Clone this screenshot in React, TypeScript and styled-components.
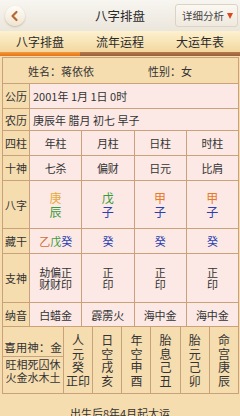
import styled, { createGlobalStyle } from "styled-components";

const GlobalStyle = createGlobalStyle`
  html, body {
    margin: 0;
    padding: 0;
  }
  body {
    width: 240px;
    height: 416px;
    overflow: hidden;
    background: #f6ddaf;
    color: #333;
    font-family: "Noto Sans CJK SC", "Noto Sans", sans-serif;
  }
`;

const LINE = "#c9a27a";
const TAN = "#f6ddaf";
const PINK = "#fce9e5";

const pillars = [
  { name: "年柱", god: "七杀", stem: "庚", stemColor: "#e8a93a", branch: "辰", branchColor: "#3a9a3a" },
  { name: "月柱", god: "偏财", stem: "戊", stemColor: "#3a9a3a", branch: "子", branchColor: "#2a3fb0" },
  { name: "日柱", god: "日元", stem: "甲", stemColor: "#e87a2a", branch: "子", branchColor: "#2a3fb0" },
  { name: "时柱", god: "比肩", stem: "甲", stemColor: "#e87a2a", branch: "子", branchColor: "#2a3fb0" },
];

const hidden = [
  [
    { t: "乙", c: "#d0703a" },
    { t: "戊", c: "#3a9a3a" },
    { t: "癸", c: "#2a3fb0" },
  ],
  [{ t: "癸", c: "#2a3fb0" }],
  [{ t: "癸", c: "#2a3fb0" }],
  [{ t: "癸", c: "#2a3fb0" }],
];

const branchGods = [
  ["劫偏正", "财财印"],
  ["正", "印"],
  ["正", "印"],
  ["正", "印"],
];

const nayin = ["白蜡金", "霹雳火", "海中金", "海中金"];

const extras = [
  ["人", "元", "癸", "正印"],
  ["日", "空", "戌", "亥"],
  ["年", "空", "申", "酉"],
  ["胎", "息", "己", "丑"],
  ["胎", "元", "己", "卯"],
  ["命", "宫", "庚", "辰"],
];

const App = () => {
  return (
    <>
      <GlobalStyle />
      <Header>
        <BackBtn>
          <svg width="20" height="20" viewBox="0 0 20 20">
            <polyline
              points="11.5,6 7.5,10 11.5,14"
              fill="none"
              stroke="#b8672e"
              strokeWidth="2.2"
              strokeLinecap="round"
              strokeLinejoin="round"
            />
          </svg>
        </BackBtn>
        <Title>八字排盘</Title>
        <DetailBtn>
          详细分析<Arrow />
        </DetailBtn>
      </Header>
      <Tabs>
        <Tab>八字排盘</Tab>
        <Tab>流年运程</Tab>
        <Tab>大运年表</Tab>
      </Tabs>
      <Underline>
        <UnderlinePart $active />
        <UnderlinePart />
        <UnderlinePart />
      </Underline>

      <Table>
        <NameRow>
          <NameField>姓名：蒋依依</NameField>
          <span>性别：女</span>
        </NameRow>

        <Label>公历</Label>
        <WideCell>2001年 1月 1日 0时</WideCell>

        <Label>农历</Label>
        <WideCell>庚辰年 腊月 初七 早子</WideCell>

        <Label>四柱</Label>
        {pillars.map((p) => (
          <Cell key={p.name}>{p.name}</Cell>
        ))}

        <Label>十神</Label>
        {pillars.map((p) => (
          <Cell key={p.name}>{p.god}</Cell>
        ))}

        <Label>八字</Label>
        {pillars.map((p) => (
          <Cell key={p.name}>
            <Stack $lh={14} $size={12}>
              <span style={{ color: p.stemColor }}>{p.stem}</span>
              <span style={{ color: p.branchColor }}>{p.branch}</span>
            </Stack>
          </Cell>
        ))}

        <Label>藏干</Label>
        {hidden.map((list, i) => (
          <Cell key={i}>
            {list.map((h, j) => (
              <span key={j} style={{ color: h.c }}>
                {h.t}
              </span>
            ))}
          </Cell>
        ))}

        <Label>支神</Label>
        {branchGods.map((lines, i) => (
          <Cell key={i}>
            <Stack $lh={12} $size={11}>
              {lines.map((l, j) => (
                <span key={j}>{l}</span>
              ))}
            </Stack>
          </Cell>
        ))}

        <Label>纳音</Label>
        {nayin.map((n, i) => (
          <Cell key={i}>{n}</Cell>
        ))}
      </Table>

      <Bottom>
        <FavCell>喜用神：金</FavCell>
        <StateCell>
          <span>旺相死囚休</span>
          <span>火金水木土</span>
        </StateCell>
        {extras.map((lines, i) => (
          <VerticalCell key={i} $col={i + 2}>
            {lines.map((l, j) => (
              <span key={j}>{l}</span>
            ))}
          </VerticalCell>
        ))}
      </Bottom>

      <Footer>出生后8年4月起大运</Footer>
    </>
  );
};

export default App;

const Header = styled.div`
  height: 31px;
  display: grid;
  grid-template-columns: 1fr auto 1fr;
  align-items: center;
  background: linear-gradient(#f8f6f1, #ebe6dc);
`;

const BackBtn = styled.div`
  width: 20px;
  height: 20px;
  margin-left: 5px;
  border-radius: 50%;
  background: linear-gradient(#fffdf8, #efe4d2);
  box-shadow: 0 1px 2px rgba(120, 90, 50, 0.35);
  display: flex;
  align-items: center;
  justify-content: center;
`;

const Title = styled.div`
  font-size: 12.5px;
  color: #2a2a2a;
`;

const DetailBtn = styled.div`
  justify-self: end;
  margin-right: 2px;
  height: 21px;
  padding: 0 4px 0 6px;
  display: flex;
  align-items: center;
  gap: 3px;
  font-size: 10.5px;
  color: #444;
  background: linear-gradient(#fbf8f2, #efe9de);
  border: 1px solid #ddd3c4;
  border-radius: 3px;
`;

const Arrow = styled.span`
  width: 0;
  height: 0;
  border-left: 3.5px solid transparent;
  border-right: 3.5px solid transparent;
  border-top: 6px solid #d9481e;
`;

const Tabs = styled.div`
  height: 21px;
  display: grid;
  grid-template-columns: repeat(3, 1fr);
  align-items: center;
  background: linear-gradient(#fdf1cf, #f3d8a0);
`;

const Tab = styled.div`
  text-align: center;
  font-size: 12px;
  color: #2a2a2a;
`;

const Underline = styled.div`
  height: 4px;
  display: grid;
  grid-template-columns: 80px 1fr 1fr;
`;

const UnderlinePart = styled.div<{ $active?: boolean }>`
  background: ${(p) =>
    p.$active
      ? "linear-gradient(#f59a3a, #e4731c)"
      : "linear-gradient(#b77a4c, #9a6038)"};
`;

const Table = styled.div`
  margin: 1px 1px 0 2px;
  display: grid;
  grid-template-columns: 26px repeat(4, 1fr);
  grid-template-rows: 25px 24px 21px 24px 24px 47px 24px 48px 23px;
  gap: 1px;
  background: ${LINE};
  border: 1px solid ${LINE};
  font-size: 11px;
`;

const NameRow = styled.div`
  grid-column: 1 / -1;
  background: ${TAN};
  display: flex;
  align-items: center;
  padding-left: 25px;
`;

const NameField = styled.span`
  width: 120px;
`;

const Label = styled.div`
  background: ${TAN};
  display: flex;
  align-items: center;
  justify-content: center;
`;

const WideCell = styled.div`
  grid-column: 2 / -1;
  background: ${PINK};
  display: flex;
  align-items: center;
  padding-left: 3px;
`;

const Cell = styled.div`
  background: ${PINK};
  display: flex;
  align-items: center;
  justify-content: center;
`;

const Stack = styled.div<{ $lh: number; $size: number }>`
  display: flex;
  flex-direction: column;
  align-items: center;
  font-size: ${(p) => p.$size}px;
  line-height: ${(p) => p.$lh}px;
`;

const Bottom = styled.div`
  margin: 0 1px 0 2px;
  display: grid;
  grid-template-columns: 60px repeat(6, 1fr);
  grid-template-rows: 29px 36px;
  gap: 1px;
  background: ${LINE};
  border: 1px solid ${LINE};
  border-top: none;
  font-size: 11px;
`;

const FavCell = styled.div`
  grid-column: 1;
  grid-row: 1;
  background: ${TAN};
  display: flex;
  align-items: flex-end;
  justify-content: center;
  padding-bottom: 1px;
  font-size: 11.5px;
`;

const StateCell = styled.div`
  grid-column: 1;
  grid-row: 2;
  background: ${TAN};
  display: flex;
  flex-direction: column;
  align-items: center;
  line-height: 13px;
  padding-top: 1px;
`;

const VerticalCell = styled.div<{ $col: number }>`
  grid-column: ${(p) => p.$col};
  grid-row: 1 / 3;
  background: ${TAN};
  display: flex;
  flex-direction: column;
  align-items: center;
  justify-content: center;
  font-size: 12px;
  line-height: 13.5px;
`;

const Footer = styled.div`
  height: 36px;
  padding-top: 11px;
  box-sizing: border-box;
  text-align: center;
  font-size: 11px;
  line-height: 16px;
`;
